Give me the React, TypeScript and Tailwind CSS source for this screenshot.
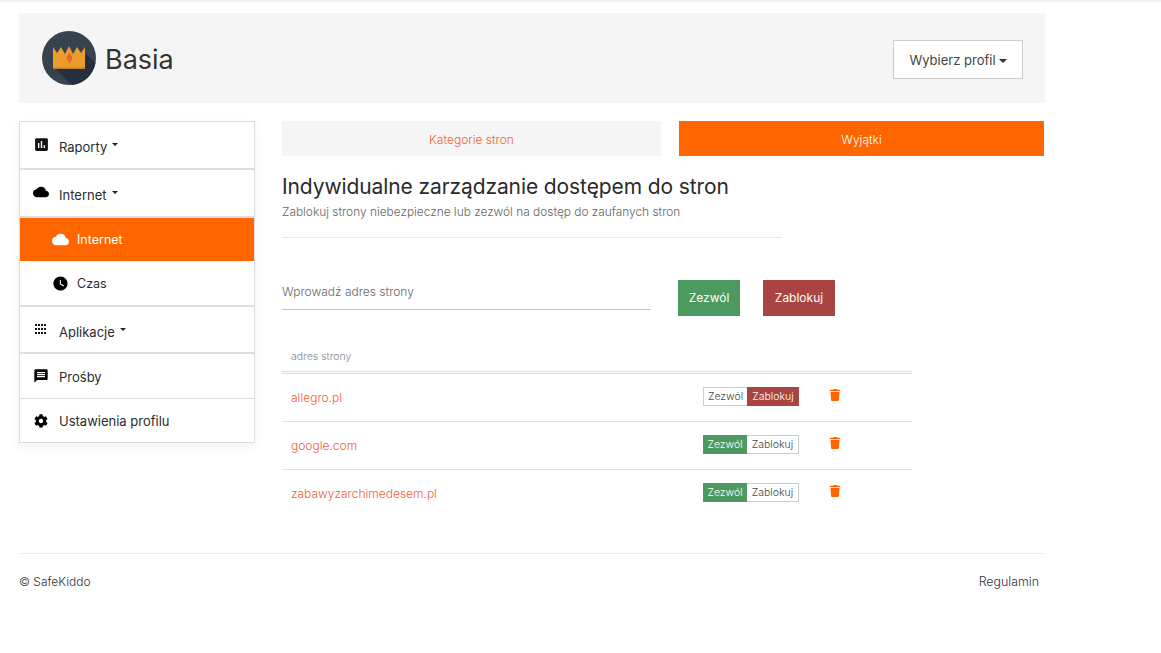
import type { ReactNode } from "react";
import { FaCog, FaTrash } from "react-icons/fa";
import { MdAssessment, MdCloud, MdMessage, MdWatchLater } from "react-icons/md";

const SITES = [
  { url: "allegro.pl", allowed: false },
  { url: "google.com", allowed: true },
  { url: "zabawyzarchimedesem.pl", allowed: true },
];

function Crown() {
  return (
    <svg viewBox="0 0 54 54" className="h-[54px] w-[54px]">
      <circle cx="27" cy="27" r="27" fill="#37424f" />
      <path d="M14 38 L30 54 A27 27 0 0 0 53.5 32 L43 22 L43 38 Z" fill="#262f3d" />
      <path d="M11 16 L15 22 L19 16 L23 23 L27 15 L31 23 L35 16 L39 22 L43 16 L43 38 L11 38 Z" fill="#eb9c2c" />
      <rect x="11" y="36.5" width="32" height="1.5" fill="#c9802a" />
      <path d="M27.5 21 L30.5 27 L27.5 33 L24.5 27 Z" fill="#e8682c" />
    </svg>
  );
}

function AppsDots() {
  return (
    <svg viewBox="0 0 12 11" className="h-[11px] w-[12px] shrink-0" fill="#111">
      {[0, 4, 8].map((y) =>
        [0, 3, 6, 9].map((x) => <rect key={`${x}-${y}`} x={x} y={y} width="2" height="2" />),
      )}
    </svg>
  );
}

function Caret() {
  return <span className="mb-[7px] ml-[5px] inline-block border-x-[3.5px] border-t-[3.5px] border-x-transparent border-t-[#222]" />;
}

function NavItem({ icon, label, caret, className, iconClass }: { icon: ReactNode; label: string; caret?: boolean; className: string; iconClass: string }) {
  return (
    <div className={`flex items-center pl-[14px] text-[13px] text-[#2b2b2b] ${className}`}>
      <span className={`mr-[11px] flex w-[14px] justify-center ${iconClass}`}>{icon}</span>
      <span>{label}</span>
      {caret && <Caret />}
    </div>
  );
}

function SubItem({ icon, label, active, className }: { icon: ReactNode; label: string; active?: boolean; className: string }) {
  return (
    <div className={`flex items-center pl-[30px] text-[12.5px] ${className} ${active ? "bg-[#ff6600] text-white" : "text-[#2b2b2b]"}`}>
      <span className="flex w-[20px] justify-center">{icon}</span>
      <span className="ml-[7px] mt-[2px]">{label}</span>
    </div>
  );
}

function Toggle({ allowed }: { allowed: boolean }) {
  return (
    <div className="flex h-[19px] text-[10.5px] leading-[17px]">
      <span className={`w-[44px] border text-center ${allowed ? "border-[#4c9a5f] bg-[#4c9a5f] text-white" : "border-[#ccc] border-r-0 text-[#444]"}`}>Zezwól</span>
      <span className={`w-[52px] border text-center ${allowed ? "border-[#ccc] border-l-0 text-[#444]" : "border-[#a94442] bg-[#a94442] text-white"}`}>Zablokuj</span>
    </div>
  );
}

export default function App() {
  return (
    <div className="min-h-[653px] bg-white font-['Inter',sans-serif] font-light text-[#2b2b2b]">
      <div className="h-[3px] bg-gradient-to-b from-[#ececec] to-white" />
      <div className="ml-[19px] w-[1026px] pt-[10px]">
        {/* Header */}
        <header className="flex h-[90px] items-center bg-[#f5f5f5] pl-[23px] pr-[22px]">
          <Crown />
          <span className="ml-[9px] mt-[5px] text-[27px] font-normal text-[#333]">Basia</span>
          <button className="ml-auto mt-[3px] flex h-[39px] w-[130px] items-center justify-center border border-[#ccc] bg-white pt-[2px] text-[13px] font-normal text-[#444]">
            Wybierz profil
            <span className="ml-[3px] mt-[1px] inline-block border-x-[4.5px] border-t-[4.5px] border-x-transparent border-t-[#333]" />
          </button>
        </header>

        <div className="mt-[18px] flex items-start">
          {/* Sidebar */}
          <nav className="w-[236px] border border-[#dcdcdc] font-normal shadow-[0_4px_10px_rgba(0,0,0,0.06)]">
            <NavItem className="h-[48px] border-b-2 border-[#dedede] pt-[6px]" iconClass="-translate-y-[4px]" icon={<MdAssessment size={17} color="#111" className="shrink-0" />} label="Raporty" caret />
            <NavItem className="h-[48px] border-b-2 border-[#dedede] pt-[6px]" iconClass="-translate-y-[4px]" icon={<MdCloud size={16} color="#000" className="shrink-0" />} label="Internet" caret />
            <SubItem className="h-[43px]" icon={<MdCloud size={17} color="#fff" />} label="Internet" active />
            <SubItem className="h-[44px]" icon={<MdWatchLater size={17} color="#000" />} label="Czas" />
            <NavItem className="h-[49px] border-y-2 border-[#dedede] pt-[6px]" iconClass="-translate-y-[3px]" icon={<AppsDots />} label="Aplikacje" caret />
            <NavItem className="h-[45px] border-b border-[#dedede] pt-[4px]" iconClass="-translate-y-[2px]" icon={<MdMessage size={16} color="#000" className="shrink-0" />} label="Prośby" />
            <NavItem className="h-[43px] pt-[3px]" iconClass="-translate-y-[1px]" icon={<FaCog size={14} color="#000" className="shrink-0" />} label="Ustawienia profilu" />
          </nav>

          {/* Main */}
          <main className="ml-[27px] w-[762px]">
            <div className="flex h-[35px] gap-[18px] text-[12px]">
              <div className="flex w-[379px] items-center justify-center bg-[#f5f5f5] pt-[2px] text-[#f0603a]">Kategorie stron</div>
              <div className="flex flex-1 items-center justify-center bg-[#ff6600] pt-[2px] text-white">Wyjątki</div>
            </div>

            <h1 className="mt-[17px] text-[21px] leading-[28px] font-normal tracking-[-0.1px] text-[#2b2b2b]">Indywidualne zarządzanie dostępem do stron</h1>
            <p className="mt-[3px] text-[11.9px] leading-[16px] text-[#666]">Zablokuj strony niebezpieczne lub zezwól na dostęp do zaufanych stron</p>
            <div className="mt-[17px] w-[500px] border-t border-[#e8e8e8]" />

            <div className="mt-[42px] flex items-start">
              <div className="flex h-[30px] w-[369px] items-center border-b border-[#c4c4c4] pb-[6px] text-[12px] text-[#666]">Wprowadź adres strony</div>
              <button className="ml-[27px] h-[36px] w-[62px] bg-[#4c9a5f] text-[12px] font-normal text-white">Zezwól</button>
              <button className="ml-[23px] h-[36px] w-[72px] bg-[#a94442] text-[12px] font-normal text-white">Zablokuj</button>
            </div>

            {/* Table */}
            <div className="mt-[27px] w-[630px]">
              <div className="flex h-[31px] items-center border-b-[3px] border-double border-[#ddd] pl-[9px] text-[10.5px] text-[#888]">adres strony</div>
              {SITES.map((site) => (
                <div key={site.url} className="flex h-[48px] items-center border-b border-[#e2e2e2] pl-[9px] last:border-b-transparent">
                  <span className="mt-[1px] flex-1 text-[12px] text-[#f0603a]">{site.url}</span>
                  <div className="-mt-[3px]">
                    <Toggle allowed={site.allowed} />
                  </div>
                  <div className="-mt-[5px] w-[113px] pl-[30px]">
                    <FaTrash size={12} color="#ff6600" />
                  </div>
                </div>
              ))}
            </div>
          </main>
        </div>

        {/* Footer */}
        <footer className="mt-[35px] flex h-[56px] items-center justify-between border-t border-[#eee] pr-[6px] text-[12px] text-[#333]">
          <span>© SafeKiddo</span>
          <span className="pt-[2px] text-[12.4px]">Regulamin</span>
        </footer>
      </div>
    </div>
  );
}
